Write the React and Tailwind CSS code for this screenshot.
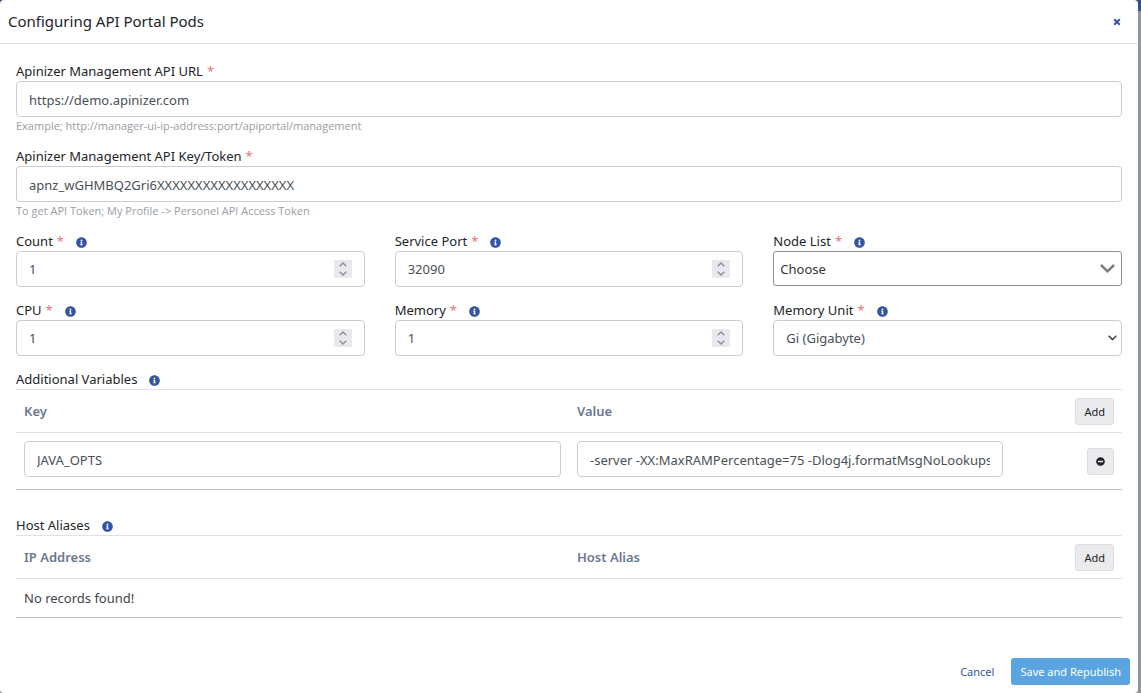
import React, { useState } from "react";
import { FaInfoCircle, FaMinusCircle } from "react-icons/fa";

const inputClass =
  "w-full h-9 rounded border border-[#c9cdd6] bg-white px-3 pt-0.5 text-[13px] text-[#495057] outline-none";

function Info({ text }) {
  return (
    <button type="button" aria-label={text} className="ml-3 pt-0.5 text-[#3455a4]">
      <FaInfoCircle size={11} />
    </button>
  );
}

function Label({ htmlFor, children, required, info }) {
  return (
    <div className="flex items-center h-5 text-[13px] leading-5 text-[#212529]">
      <label htmlFor={htmlFor}>
        {children}
        {required && <span className="ml-1 text-[#e8737a]">*</span>}
      </label>
      {info && <Info text={info} />}
    </div>
  );
}

function Hint({ children }) {
  return (
    <p className="mb-3 text-[11px] leading-[17px] text-[#9a9da3] font-['Open_Sans',sans-serif]">
      {children}
    </p>
  );
}

function NumberField({ id, label, info, value, onChange }) {
  const step = (n) => onChange(String(Math.max(0, Number(value) + n)));

  return (
    <div>
      <Label htmlFor={id} required info={info}>
        {label}
      </Label>
      <div className="flex items-center h-9 rounded border border-[#c9cdd6] bg-white px-3">
        <input
          id={id}
          type="number"
          value={value}
          onChange={(e) => onChange(e.target.value)}
          className="flex-1 min-w-0 pt-0.5 text-[13px] text-[#495057] outline-none [appearance:textfield] [&::-webkit-inner-spin-button]:appearance-none"
        />
        <div className="flex flex-col w-[18px] h-[18px] bg-[#e9e9ed] text-[#8f8f9d]">
          <button
            type="button"
            aria-label={`Increase ${label}`}
            onClick={() => step(1)}
            className="flex flex-1 items-center justify-center"
          >
            <svg width="8" height="5" viewBox="0 0 8 5" fill="none">
              <path d="M0.7 4.3 4 1 7.3 4.3" stroke="currentColor" strokeWidth="1.5" />
            </svg>
          </button>
          <button
            type="button"
            aria-label={`Decrease ${label}`}
            onClick={() => step(-1)}
            className="flex flex-1 items-center justify-center"
          >
            <svg width="8" height="5" viewBox="0 0 8 5" fill="none">
              <path d="M0.7 0.7 4 4 7.3 0.7" stroke="currentColor" strokeWidth="1.5" />
            </svg>
          </button>
        </div>
      </div>
    </div>
  );
}

function SmallButton({ children, className = "", ...props }) {
  return (
    <button
      type="button"
      className={`inline-flex items-center justify-center h-[27px] rounded-[3px] border border-[#dcdce3] bg-[#ebebed] px-2 text-[11px] text-[#212529] ${className}`}
      {...props}
    >
      {children}
    </button>
  );
}

function VariableTable({ columns, onAdd, children }) {
  return (
    <table className="w-full table-fixed border-collapse text-[13px]">
      <thead>
        <tr className="h-[43px] border-y border-[#dee2e6] text-left text-[#6c7890]">
          <th className="w-1/2 px-2 pt-0.5 pb-0 font-semibold">{columns[0]}</th>
          <th className="w-2/5 px-2 pt-0.5 pb-0 font-semibold">{columns[1]}</th>
          <th className="w-1/10 px-2 py-0 text-right leading-none">
            <SmallButton onClick={onAdd} className="font-normal">
              Add
            </SmallButton>
          </th>
        </tr>
      </thead>
      <tbody className="border-b border-[#bfc1c4]">{children}</tbody>
    </table>
  );
}

export default function App() {
  const [form, setForm] = useState({
    url: "https://demo.apinizer.com",
    token: "apnz_wGHMBQ2Gri6XXXXXXXXXXXXXXXXXX",
    count: "1",
    port: "32090",
    cpu: "1",
    memory: "1",
  });
  const [variables, setVariables] = useState([
    {
      key: "JAVA_OPTS",
      value:
        "-server -XX:MaxRAMPercentage=75 -Dlog4j.formatMsgNoLookups=true",
    },
  ]);
  const [aliases, setAliases] = useState([]);

  const setField = (name, value) => setForm({ ...form, [name]: value });

  const editRow = (rows, setRows, index, name, value) =>
    setRows(rows.map((r, i) => (i === index ? { ...r, [name]: value } : r)));

  const renderRows = (rows, setRows, labels) =>
    rows.map((row, i) => (
      <tr key={i} className="h-14">
        <td className="px-2 pt-2 pb-3">
          <input
            aria-label={labels[0]}
            className={inputClass}
            value={row.key}
            onChange={(e) => editRow(rows, setRows, i, "key", e.target.value)}
          />
        </td>
        <td className="px-2 pt-2 pb-3">
          <input
            aria-label={labels[1]}
            className={inputClass}
            value={row.value}
            onChange={(e) => editRow(rows, setRows, i, "value", e.target.value)}
          />
        </td>
        <td className="px-2 py-0 text-right leading-none">
          <SmallButton
            aria-label="Remove row"
            onClick={() => setRows(rows.filter((_, n) => n !== i))}
          >
            <FaMinusCircle size={9} />
          </SmallButton>
        </td>
      </tr>
    ));

  return (
    <div className="min-h-screen flex pr-[3px] bg-[linear-gradient(#344f87_11px,#91969b_11px)] font-['Noto_Sans','Open_Sans',sans-serif]">
      <div
        role="dialog"
        aria-labelledby="dialog-title"
        className="flex flex-1 flex-col rounded bg-white"
      >
        <header className="flex items-center justify-between h-11 border-b border-[#dee2e6] pl-2 pr-[17px]">
          <h1 id="dialog-title" className="text-[15px] text-[#212529]">
            Configuring API Portal Pods
          </h1>
          <button type="button" aria-label="Close" className="text-[#3455a4]">
            <svg width="8" height="8" viewBox="0 0 8 8" fill="none">
              <path d="M1.2 1.2 6.8 6.8M6.8 1.2 1.2 6.8" stroke="currentColor" strokeWidth="2" />
            </svg>
          </button>
        </header>

        <main className="flex-1 px-4 pt-[17px]">
          <Label htmlFor="url" required>
            Apinizer Management API URL
          </Label>
          <input
            id="url"
            className={inputClass}
            value={form.url}
            onChange={(e) => setField("url", e.target.value)}
          />
          <Hint>
            Example; http://manager-ui-ip-address:port/apiportal/management
          </Hint>

          <Label htmlFor="token" required>
            Apinizer Management API Key/Token
          </Label>
          <input
            id="token"
            className={inputClass}
            value={form.token}
            onChange={(e) => setField("token", e.target.value)}
          />
          <Hint>
            To get API Token; My Profile -&gt; Personel API Access Token
          </Hint>

          <div className="grid grid-cols-3 gap-x-[30px] gap-y-[13px] mb-[13px]">
            <NumberField
              id="count"
              label="Count"
              info="Number of pods"
              value={form.count}
              onChange={(v) => setField("count", v)}
            />
            <NumberField
              id="port"
              label="Service Port"
              info="Port of the service"
              value={form.port}
              onChange={(v) => setField("port", v)}
            />
            <div>
              <Label htmlFor="nodes" required info="Nodes to run on">
                Node List
              </Label>
              <div className="grid items-center">
                <select
                  id="nodes"
                  className="col-start-1 row-start-1 w-full h-[35px] appearance-none rounded-[3px] border border-[#8f8f94] bg-white px-1.5 pt-0.5 text-[13px] text-[#333333] outline-none"
                >
                  <option>Choose</option>
                </select>
                <svg
                  className="col-start-1 row-start-1 justify-self-end mr-[7px] pointer-events-none text-[#7b7d80]"
                  width="15"
                  height="9"
                  viewBox="0 0 15 9"
                  fill="none"
                >
                  <path d="M1 1 7.5 7.3 14 1" stroke="currentColor" strokeWidth="2.5" />
                </svg>
              </div>
            </div>
            <NumberField
              id="cpu"
              label="CPU"
              info="CPU cores"
              value={form.cpu}
              onChange={(v) => setField("cpu", v)}
            />
            <NumberField
              id="memory"
              label="Memory"
              info="Memory amount"
              value={form.memory}
              onChange={(v) => setField("memory", v)}
            />
            <div>
              <Label htmlFor="unit" required info="Unit of the memory">
                Memory Unit
              </Label>
              <div className="grid items-center">
                <select
                  id="unit"
                  className={`${inputClass} col-start-1 row-start-1 appearance-none`}
                >
                  <option>Gi (Gigabyte)</option>
                  <option>Mi (Megabyte)</option>
                </select>
                <svg
                  className="col-start-1 row-start-1 justify-self-end mr-[5px] pointer-events-none text-[#3f444a]"
                  width="9"
                  height="6"
                  viewBox="0 0 9 6"
                  fill="none"
                >
                  <path d="M0.7 0.8 4.5 4.6 8.3 0.8" stroke="currentColor" strokeWidth="1.5" />
                </svg>
              </div>
            </div>
          </div>

          <Label info="Environment variables of the pods">
            Additional Variables
          </Label>
          <VariableTable
            columns={["Key", "Value"]}
            onAdd={() => setVariables([...variables, { key: "", value: "" }])}
          >
            {renderRows(variables, setVariables, ["Key", "Value"])}
          </VariableTable>

          <div className="mt-[25px]">
            <Label info="Host aliases of the pods">Host Aliases</Label>
            <VariableTable
              columns={["IP Address", "Host Alias"]}
              onAdd={() => setAliases([...aliases, { key: "", value: "" }])}
            >
              {aliases.length > 0 ? (
                renderRows(aliases, setAliases, ["IP Address", "Host Alias"])
              ) : (
                <tr className="h-[39px]">
                  <td colSpan={3} className="px-2 pt-0.5 text-[#3f444a]">
                    No records found!
                  </td>
                </tr>
              )}
            </VariableTable>
          </div>
        </main>

        <footer className="flex items-center justify-end gap-2 px-2 pb-2 text-[11px]">
          <button type="button" className="h-[27px] px-[9px] pt-px text-[#3455a4]">
            Cancel
          </button>
          <button
            type="button"
            className="h-[27px] rounded-[3px] bg-[#5aa5e1] px-[9px] pt-px text-white"
          >
            Save and Republish
          </button>
        </footer>
      </div>
    </div>
  );
}
